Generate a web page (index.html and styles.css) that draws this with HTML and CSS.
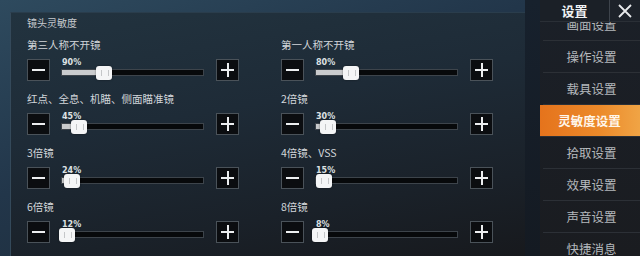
FILE: index.html
```html
<!DOCTYPE html>
<html lang="zh">
<head>
<meta charset="utf-8">
<link rel="stylesheet" href="styles.css">
</head>
<body>
<div class="screen">
  <div class="panel">
    <div class="panel-title">镜头灵敏度</div>
    <div class="grid">
      <div class="setting">
        <div class="label">第三人称不开镜</div>
        <div class="controls">
          <div class="btn minus"></div>
          <div class="slider">
            <div class="pct">90%</div>
            <div class="track"><div class="fill" style="width:29.8%"></div><div class="knob" style="left:29.8%"></div></div>
          </div>
          <div class="btn plus"></div>
        </div>
      </div>
      <div class="setting">
        <div class="label">第一人称不开镜</div>
        <div class="controls">
          <div class="btn minus"></div>
          <div class="slider">
            <div class="pct">80%</div>
            <div class="track"><div class="fill" style="width:24.5%"></div><div class="knob" style="left:24.5%"></div></div>
          </div>
          <div class="btn plus"></div>
        </div>
      </div>
      <div class="setting">
        <div class="label">红点、全息、机瞄、侧面瞄准镜</div>
        <div class="controls">
          <div class="btn minus"></div>
          <div class="slider">
            <div class="pct">45%</div>
            <div class="track"><div class="fill" style="width:12%"></div><div class="knob" style="left:12%"></div></div>
          </div>
          <div class="btn plus"></div>
        </div>
      </div>
      <div class="setting">
        <div class="label">2倍镜</div>
        <div class="controls">
          <div class="btn minus"></div>
          <div class="slider">
            <div class="pct">30%</div>
            <div class="track"><div class="fill" style="width:8.5%"></div><div class="knob" style="left:8.5%"></div></div>
          </div>
          <div class="btn plus"></div>
        </div>
      </div>
      <div class="setting">
        <div class="label">3倍镜</div>
        <div class="controls">
          <div class="btn minus"></div>
          <div class="slider">
            <div class="pct">24%</div>
            <div class="track"><div class="fill" style="width:7%"></div><div class="knob" style="left:7%"></div></div>
          </div>
          <div class="btn plus"></div>
        </div>
      </div>
      <div class="setting">
        <div class="label">4倍镜、VSS</div>
        <div class="controls">
          <div class="btn minus"></div>
          <div class="slider">
            <div class="pct">15%</div>
            <div class="track"><div class="fill" style="width:5.5%"></div><div class="knob" style="left:5.5%"></div></div>
          </div>
          <div class="btn plus"></div>
        </div>
      </div>
      <div class="setting">
        <div class="label">6倍镜</div>
        <div class="controls">
          <div class="btn minus"></div>
          <div class="slider">
            <div class="pct">12%</div>
            <div class="track"><div class="fill" style="width:3.5%"></div><div class="knob" style="left:3.5%"></div></div>
          </div>
          <div class="btn plus"></div>
        </div>
      </div>
      <div class="setting">
        <div class="label">8倍镜</div>
        <div class="controls">
          <div class="btn minus"></div>
          <div class="slider">
            <div class="pct">8%</div>
            <div class="track"><div class="fill" style="width:3%"></div><div class="knob" style="left:3%"></div></div>
          </div>
          <div class="btn plus"></div>
        </div>
      </div>
    </div>
  </div>
  <div class="gutter"></div>
  <div class="sidebar">
    <div class="side-head">
      <div class="side-title">设置</div>
      <div class="side-close">
        <svg width="16" height="16" viewBox="0 0 16 16"><path d="M2 2 L14 14 M14 2 L2 14" stroke="#e8eaec" stroke-width="1.8" fill="none"/></svg>
      </div>
    </div>
    <ul class="menu">
      <li class="item">画面设置</li>
      <li class="item">操作设置</li>
      <li class="item">载具设置</li>
      <li class="item active">灵敏度设置</li>
      <li class="item">拾取设置</li>
      <li class="item">效果设置</li>
      <li class="item">声音设置</li>
      <li class="item">快捷消息</li>
    </ul>
  </div>
</div>
</body>
</html>
```
FILE: styles.css
```css
* { box-sizing: border-box; }
html, body {
  margin: 0;
  padding: 0;
  width: 640px;
  height: 256px;
  overflow: hidden;
}
body {
  font-family: "Noto Sans CJK SC", "Noto Sans", sans-serif;
  background: linear-gradient(160deg, #2e4a5e 0%, #22364a 40%, #1a2530 100%);
  color: #d4d8dc;
}
.screen {
  display: flex;
  height: 256px;
}
.panel {
  margin-top: 12px;
  margin-left: 10px;
  width: 515px;
  height: 244px;
  padding: 3px 0 0 16px;
  background: linear-gradient(170deg, #22333f 0%, #1e2b37 40%, #1a2129 75%, #17191d 100%);
  border-left: 1px solid #34495a;
  border-top: 1px solid #2a3d4c;
}
.panel-title {
  font-size: 10px;
  line-height: 14px;
  color: #c8ccd0;
  margin-bottom: 8px;
}
.grid {
  display: grid;
  grid-template-columns: 254px 254px;
  row-gap: 11px;
}
.label {
  font-size: 10.5px;
  line-height: 14px;
  color: #d2d6da;
  height: 14px;
  margin-bottom: 7px;
  white-space: nowrap;
}
.controls {
  display: flex;
  align-items: flex-start;
  height: 22px;
}
.btn {
  width: 23px;
  height: 22px;
  background: #0b0d10;
  border: 1px solid #4a5259;
  position: relative;
  flex: none;
}
.btn::before, .plus::after {
  content: "";
  position: absolute;
  left: 4px;
  right: 4px;
  top: 9px;
  height: 2px;
  background: #eceef0;
}
.plus::after {
  left: 10px;
  right: auto;
  width: 2px;
  top: 3px;
  height: 14px;
}
.slider {
  width: 143px;
  margin: 0 12px 0 11px;
  flex: none;
}
.pct {
  font-family: "DejaVu Sans", sans-serif;
  font-weight: bold;
  font-size: 8px;
  line-height: 8px;
  height: 10px;
  color: #dfe2e4;
  padding-left: 1px;
}
.track {
  position: relative;
  height: 7px;
  background: #07090b;
  border: 1px solid #3d444b;
}
.fill {
  position: absolute;
  left: 0;
  top: 0;
  bottom: 0;
  background: #c9cbcd;
}
.knob {
  position: absolute;
  top: -4px;
  width: 16px;
  height: 14px;
  margin-left: -8px;
  background: #f4f5f6;
  border-radius: 3px;
  box-shadow: 0 0 2px rgba(0,0,0,0.5);
}
.knob::after {
  content: "";
  position: absolute;
  left: 5px;
  top: 4px;
  width: 6px;
  height: 6px;
  border-left: 1px solid #c4c6c8;
  border-right: 1px solid #c4c6c8;
}
.gutter {
  width: 15px;
  background: linear-gradient(180deg, #17212d 0%, #141a22 100%);
  flex: none;
}
.sidebar {
  position: relative;
  width: 100px;
  flex: none;
  background: linear-gradient(180deg, #1b2028 0%, #1a1c20 100%);
  overflow: hidden;
}
.side-head {
  position: absolute;
  top: 0;
  left: 0;
  right: 0;
  height: 22px;
  display: flex;
  z-index: 2;
}
.side-title {
  width: 70px;
  background: #1b2027;
  border-right: 1px solid #3e444c;
  border-bottom: 1px solid #2a2f36;
  color: #f0f2f4;
  font-size: 13px;
  font-weight: bold;
  line-height: 21px;
  text-align: center;
}
.side-close {
  flex: 1;
  background: #1d222a;
  border-bottom: 1px solid #2a2f36;
  display: flex;
  align-items: center;
  justify-content: center;
}
.menu {
  list-style: none;
  margin: 0;
  padding: 9px 0 0 0;
}
.item {
  height: 32px;
  line-height: 31px;
  text-align: center;
  font-size: 12.5px;
  color: #b4b8bc;
  border-bottom: 1px solid #2c3036;
  margin-left: 3px;
}
.item.active {
  margin-left: -1px;
  background: linear-gradient(90deg, #e5731c 0%, #ec8a2a 60%, #f0a445 100%);
  color: #fff6ea;
  font-weight: bold;
  border-bottom: 1px solid #2c3036;
}
```
